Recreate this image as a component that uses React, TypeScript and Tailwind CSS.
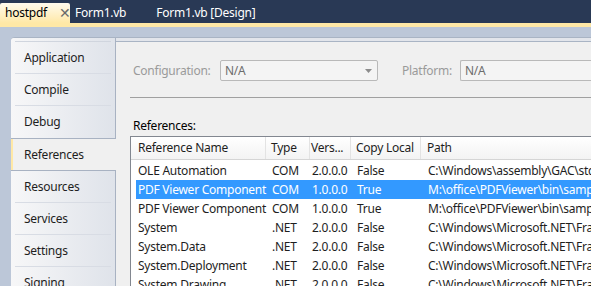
import React from "react";

const font = { fontFamily: '"Noto Sans", "Open Sans", sans-serif' };

const rows = [
  ["OLE Automation", "COM", "2.0.0.0", "False", "C:\\Windows\\assembly\\GAC\\stdole\\7.0.3300.0"],
  ["PDF Viewer Component", "COM", "1.0.0.0", "True", "M:\\office\\PDFViewer\\bin\\samples"],
  ["PDF Viewer Component", "COM", "1.0.0.0", "True", "M:\\office\\PDFViewer\\bin\\samples"],
  ["System", ".NET", "2.0.0.0", "False", "C:\\Windows\\Microsoft.NET\\Framework"],
  ["System.Data", ".NET", "2.0.0.0", "False", "C:\\Windows\\Microsoft.NET\\Framework"],
  ["System.Deployment", ".NET", "2.0.0.0", "False", "C:\\Windows\\Microsoft.NET\\Framework"],
  ["System.Drawing", ".NET", "2.0.0.0", "False", "C:\\Windows\\Microsoft.NET\\Framework"],
];

function NavItem({ label, last }: { label: string; last?: boolean }) {
  return (
    <div className="h-[32px] flex items-center relative">
      <span className="pl-[13px] text-[12px] text-[#1e1e1e]">{label}</span>
      {!last && <div className="absolute bottom-0 left-[4px] right-[4px] h-px bg-[#d8dce4]" />}
    </div>
  );
}

export default function App() {
  return (
    <div className="w-[591px] h-[286px] overflow-hidden bg-[#bcc7d8] flex flex-col tracking-[-0.25px]" style={font}>
      {/* Tab bar */}
      <div className="h-[23px] bg-[#293955] flex items-end shrink-0">
        <div className="w-[70px] h-[20px] rounded-t-[2px] bg-gradient-to-b from-[#fffbee] to-[#ffe8a6] flex items-center pl-[5px] text-[12px] text-black">
          <span>hostpdf</span>
          <span className="ml-[12px] text-[#6b6b6b] text-[14px] leading-none">✕</span>
        </div>
        <div className="h-[20px] flex items-center text-[12px] text-white">
          <span className="ml-[5px]">Form1.vb</span>
          <span className="ml-[30px]">Form1.vb [Design]</span>
        </div>
      </div>
      <div className="h-[4px] bg-[#ffe8a6] shrink-0" />
      <div className="h-[10px] shrink-0" />
      {/* Body */}
      <div className="flex-1 flex pl-[11px]">
        <div className="flex-1 flex rounded-tl-[4px] border-t border-[#a9b4c4] bg-[#f0f0f0]">
          {/* Sidebar */}
          <div className="w-[105px] flex flex-col shrink-0">
            <div className="rounded-tl-[3px] border-r border-b border-[#a8b2c2] bg-gradient-to-r from-[#f7f7f8] to-[#dfe3ea] pt-[3px]">
              <div className="mx-[4px] h-px bg-[#d0d5de]" />
              <NavItem label="Application" />
              <NavItem label="Compile" />
              <NavItem label="Debug" last />
            </div>
            <div className="h-[31px] flex items-center border-l-2 border-[#ffe8a6] bg-[#f0f0f0]">
              <span className="pl-[11px] text-[12px] text-[#1e1e1e]">References</span>
            </div>
            <div className="flex-1 border-t border-r border-[#a8b2c2] bg-gradient-to-r from-[#f7f7f8] to-[#dfe3ea]">
              <NavItem label="Resources" />
              <NavItem label="Services" />
              <NavItem label="Settings" />
              <NavItem label="Signing" last />
            </div>
          </div>
          {/* Content */}
          <div className="flex-1 flex flex-col min-w-0">
            <div className="h-[4px] bg-[#e2e5eb] border-b border-[#a9b4c4]" />
            <div className="flex-1 bg-[#f0f0f0] pl-[14px] min-w-0">
              <div className="flex items-center mt-[18px] h-[21px]">
                <span className="ml-[3px] text-[12px] text-[#9a9a9a] w-[87px]">Configuration:</span>
                <div className="w-[158px] h-[21px] border border-[#b9b9b9] rounded-[2px] bg-[#f4f4f4] flex items-center pl-[4px] pr-[5px] justify-between">
                  <span className="text-[12px] text-[#6d6d6d]">N/A</span>
                  <svg width="7" height="4" viewBox="0 0 7 4"><path d="M0 0h7L3.5 4z" fill="#8c8c8c" /></svg>
                </div>
                <span className="ml-[24px] text-[12px] text-[#9a9a9a] w-[58px]">Platform:</span>
                <div className="flex-1 h-[21px] border border-r-0 border-[#b9b9b9] rounded-l-[2px] bg-[#f4f4f4] flex items-center pl-[4px]">
                  <span className="text-[12px] text-[#6d6d6d]">N/A</span>
                </div>
              </div>
              <div className="mt-[16px] h-px bg-[#a0a0a0]" />
              <div className="mt-[20px] ml-[3px] text-[12px] text-black leading-[16px]">References:</div>
              <div className="mt-[2px] border-l border-t border-[#828790] bg-white h-[200px] overflow-hidden">
                <div className="h-[23px] flex items-center bg-gradient-to-b from-white to-[#f3f3f3] border-b border-[#d5d5d5] text-[12px] text-[#1e1e1e] whitespace-nowrap">
                  <div className="w-[135px] shrink-0 pl-[7px] h-full flex items-center border-r border-[#e3e3e3]">Reference Name</div>
                  <div className="w-[44px] shrink-0 pl-[5px] h-full flex items-center border-r border-[#e3e3e3]">Type</div>
                  <div className="w-[41px] shrink-0 pl-[1px] h-full flex items-center border-r border-[#e3e3e3]">Vers...</div>
                  <div className="w-[70px] shrink-0 pl-[5px] h-full flex items-center border-r border-[#e3e3e3]">Copy Local</div>
                  <div className="flex-1 pl-[6px] h-full flex items-center">Path</div>
                </div>
                <div className="pt-[1px]">
                  {rows.map((r, i) => {
                    const sel = i === 1;
                    return (
                      <div
                        key={i}
                        className={`ml-[5px] h-[19px] flex items-center text-[12px] whitespace-nowrap ${sel ? "bg-[#3399ff] text-white" : "text-[#1e1e1e]"}`}
                      >
                        <div className="w-[130px] shrink-0 pl-[2px]">{r[0]}</div>
                        <div className="w-[44px] shrink-0 pl-[6px]">{r[1]}</div>
                        <div className="w-[41px] shrink-0 pl-[2px]">{r[2]}</div>
                        <div className="w-[70px] shrink-0 pl-[6px]">{r[3]}</div>
                        <div className="flex-1 pl-[7px]">{r[4]}</div>
                      </div>
                    );
                  })}
                </div>
              </div>
            </div>
          </div>
        </div>
      </div>
    </div>
  );
}
